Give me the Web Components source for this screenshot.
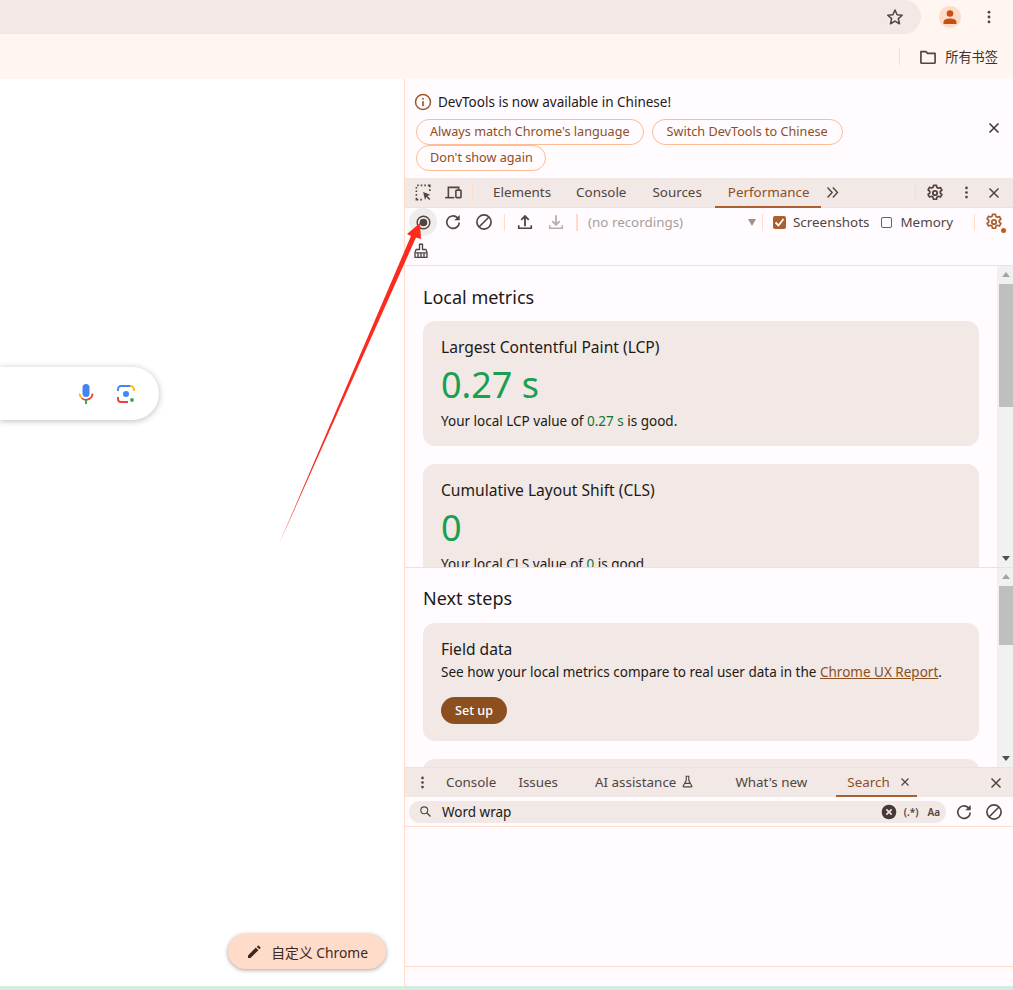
<!DOCTYPE html>
<html>
<head>
<meta charset="utf-8">
<title>DevTools</title>
<style>
html, body { margin: 0; padding: 0; height: 990px; overflow: hidden; background: #fff; }
body { font-family: "Noto Sans", "Noto Sans CJK SC", sans-serif; font-size: 13.5px; color: #201a17; position: relative; }
#arrow { position: absolute; left: 0; top: 0; pointer-events: none; z-index: 5; }
</style>
</head>
<body>
<browser-window></browser-window>
<svg id="arrow" width="1013" height="990" viewBox="0 0 1013 990"><polygon fill="#fb2b1e" points="279,544 411,236 407,234 420,223 421,239 416,237.500"/></svg>

<script>
( function() {
	const ICON = {
		star: '<path d="M12 3.600l2.500 5.700 6.200.6-4.700 4.100 1.400 6.100L12 16.900l-5.400 3.200L8 14 3.300 9.900l6.200-.6z" fill="none" stroke="currentColor" stroke-width="1.800" stroke-linejoin="round"/>',
		folder: '<path d="M3.500 5.500h6l2 2.200h9v10.800a1 1 0 0 1-1 1h-15a1 1 0 0 1-1-1z" fill="none" stroke="currentColor" stroke-width="2" stroke-linejoin="round"/>',
		info: '<circle cx="12" cy="12" r="9" fill="none" stroke="currentColor" stroke-width="1.800"/><rect x="11" y="11" width="2" height="6" fill="currentColor"/><rect x="11" y="7.200" width="2" height="2" fill="currentColor"/>',
		close: '<path d="M6 6l12 12M18 6L6 18" fill="none" stroke="currentColor" stroke-width="2"/>',
		inspect: '<path d="M4 3h2M8.500 3h2M13 3h2M17.500 3H20v2.500M20 8v2M3 5v2M3 9.500v2M3 14v2M3 18.500V21h2.500M8 21h2" fill="none" stroke="currentColor" stroke-width="2"/><path d="M11.500 11.500l9 3.300-3.700 1.500 3.800 3.800-1.400 1.400-3.800-3.800-1.500 3.700z" fill="currentColor"/>',
		device: '<path d="M5.500 18.500V5.500h13V8" fill="none" stroke="currentColor" stroke-width="2"/><path d="M1.500 18.500h11.500" fill="none" stroke="currentColor" stroke-width="2"/><rect x="15" y="9" width="6.500" height="9.500" rx="1" fill="none" stroke="currentColor" stroke-width="2"/>',
		more2: '<path d="M5 5l6.500 7L5 19M12.500 5l6.500 7-6.500 7" fill="none" stroke="currentColor" stroke-width="2"/>',
		gear: '<path d="M10.200 2.800h3.600l.5 2.600 1.700.9 2.500-.9 1.800 3.100-2 1.700v1.900l2 1.700-1.800 3.100-2.500-.9-1.700 1-.5 2.500h-3.600l-.5-2.500-1.700-1-2.500.9-1.800-3.100 2-1.700V9.900l-2-1.700 1.800-3.100 2.500.9 1.700-.9z" fill="none" stroke="currentColor" stroke-width="2" stroke-linejoin="round"/><circle cx="12" cy="12" r="2.600" fill="none" stroke="currentColor" stroke-width="2.200"/>',
		dots: '<circle cx="12" cy="5.500" r="1.900" fill="currentColor"/><circle cx="12" cy="12" r="1.900" fill="currentColor"/><circle cx="12" cy="18.500" r="1.900" fill="currentColor"/>',
		record: '<circle cx="12" cy="12" r="8" fill="none" stroke="currentColor" stroke-width="1.800"/><circle cx="12" cy="12" r="4.800" fill="currentColor"/>',
		reload: '<path d="M19.500 12.500a7.500 7.500 0 1 1-2.300-5.700L19 8.500" fill="none" stroke="currentColor" stroke-width="2"/><path d="M20 3.500v6.500h-6.500z" fill="currentColor"/>',
		block: '<circle cx="12" cy="12" r="8.500" fill="none" stroke="currentColor" stroke-width="2"/><path d="M6 18L18 6" stroke="currentColor" stroke-width="2"/>',
		upload: '<path d="M12 17V6M7.500 9.500L12 5l4.500 4.500" fill="none" stroke="currentColor" stroke-width="2.200"/><path d="M4.500 16v3.500h15V16" fill="none" stroke="currentColor" stroke-width="2"/>',
		download: '<path d="M12 4v11M7.500 11L12 15.500l4.500-4.500" fill="none" stroke="currentColor" stroke-width="2.200"/><path d="M4.500 16v3.500h15V16" fill="none" stroke="currentColor" stroke-width="2"/>',
		broom: '<path d="M10 10V3h4v7h4.500l1.500 4v6.500H4V14l1.500-4z" fill="none" stroke="currentColor" stroke-width="1.800" stroke-linejoin="round"/><path d="M4.500 14.500h15M8 15v5M12 15v5M16 15v5" stroke="currentColor" stroke-width="1.800"/>',
		flask: '<path d="M9 3.500h6M10 4v6l-5 9.500a.7.7 0 0 0 .6 1h12.800a.7.7 0 0 0 .6-1L14 10V4M8 15h8" fill="none" stroke="currentColor" stroke-width="1.800"/>',
		search: '<circle cx="10" cy="10" r="5.500" fill="none" stroke="currentColor" stroke-width="1.800"/><path d="M14 14l6 6" stroke="currentColor" stroke-width="2"/>',
		clear: '<circle cx="12" cy="12" r="11" fill="currentColor"/><path d="M8 8l8 8M16 8l-8 8" stroke="#f2e8e5" stroke-width="2.400"/>',
		pen: '<path d="M3 21v-3.800L14.800 5.400l3.800 3.800L6.800 21zM16.200 4l1.500-1.500a1 1 0 0 1 1.400 0l2.400 2.400a1 1 0 0 1 0 1.400L20 7.800z" fill="currentColor"/>'
	} ;
	function icon(name,size) {
		return '<svg width="'+size+'" height="'+size+'" viewBox="0 0 24 24" style="display:block;flex:none">'+ICON[name]+'</svg>' ;
	}

	class DtIcon extends HTMLElement {
		connectedCallback() {
			var size = this.getAttribute('size') || 20 ;
			var sroot = this.attachShadow({mode:'open'}) ;
			sroot.innerHTML = '<style>:host{display:block;flex:none;color:inherit;line-height:0}</style>' + icon(this.getAttribute('name'),size) ;
		}
	}

	class BrowserBar extends HTMLElement {
		constructor() {
			super() ;
			this.attachShadow({mode:'open'}).innerHTML = `<style>
				:host { display:block; background:#fff6f1; height:79px; color:#504541; }
				.top { display:flex; align-items:center; height:34px; }
				.omni { width:921px; height:34px; flex:none; background:#f2e8e5; border-radius:0 17px 17px 0; box-sizing:border-box; display:flex; justify-content:flex-end; align-items:center; padding-right:16px; }
				.avatar { margin-left:18px; width:22px; height:22px; border-radius:50%; background:#ffdbc9; display:flex; align-items:center; justify-content:center; }
				.menu { margin-left:19px; }
				.marks { display:flex; align-items:center; height:45px; padding-right:15px; justify-content:flex-end; }
				.sep { width:1px; height:17px; background:#ffdbc9; margin-right:18px; }
				.label { font-size:13.200px; margin-left:7px; color:#3a302c; font-family:"Noto Sans CJK SC",sans-serif; }
			</style>
			<div class="top">
				<div class="omni"><dt-icon name="star" size="20"></dt-icon></div>
				<div class="avatar"><svg width="16" height="16" viewBox="0 0 16 16"><circle cx="8" cy="4.500" r="3.300" fill="#c8500f"/><path d="M1.500 15v-2c0-2.500 3.500-3.600 6.500-3.600s6.500 1.100 6.500 3.600v2z" fill="#c8500f"/></svg></div>
				<div class="menu"><dt-icon name="dots" size="18"></dt-icon></div>
			</div>
			<div class="marks"><div class="sep"></div><dt-icon name="folder" size="20"></dt-icon><span class="label">所有书签</span></div>` ;
		}
	}

	class NtpPage extends HTMLElement {
		constructor() {
			super() ;
			this.attachShadow({mode:'open'}).innerHTML = `<style>
				:host { display:flex; flex-direction:column; width:404px; flex:none; background:#fff; overflow:hidden; }
				.search { margin-top:288px; width:159px; height:53px; box-sizing:border-box; background:#fff; border-radius:0 27px 27px 0; box-shadow:0 1px 6px rgba(60,40,30,.32); display:flex; align-items:center; justify-content:flex-end; padding-right:23px; gap:20px; }
				.fill { flex:1; }
				.row { display:flex; justify-content:flex-end; padding:0 18px 17px 0; }
				.cust { display:flex; align-items:center; height:35px; padding:0 18px 0 18px; gap:9px; border-radius:18px; background:#ffdbc9; box-shadow:0 1px 4px rgba(60,40,30,.45); color:#3a2a22; font-size:13.800px; font-family:"Noto Sans","Noto Sans CJK SC",sans-serif; }
			</style>
			<div class="search">
				<svg width="20" height="22" viewBox="0 0 20 22"><rect x="6.500" y="1" width="7" height="13" rx="3.500" fill="#4285f4"/><path d="M3.500 10.500a6.500 6.500 0 0 0 2.800 5" fill="none" stroke="#fbbc04" stroke-width="1.800"/><path d="M6 15.400a6.500 6.500 0 0 0 10.500-4.900" fill="none" stroke="#ea4335" stroke-width="1.800"/><rect x="9" y="17" width="2" height="4" fill="#34a853"/></svg>
				<svg width="20" height="20" viewBox="0 0 20 20"><path d="M2 7V5a3 3 0 0 1 3-3h9" fill="none" stroke="#4285f4" stroke-width="1.900"/><path d="M14 2a4 4 0 0 1 4 4v1" fill="none" stroke="#fbbc04" stroke-width="1.900"/><path d="M2 13v2a3 3 0 0 0 3 3h7" fill="none" stroke="#ea4335" stroke-width="1.900"/><circle cx="10" cy="10" r="3" fill="#4285f4"/><circle cx="16" cy="16" r="1.900" fill="#34a853"/></svg>
			</div>
			<div class="fill"></div>
			<div class="row"><div class="cust"><dt-icon name="pen" size="16"></dt-icon><span>自定义 Chrome</span></div></div>` ;
		}
	}

	class InfoBar extends HTMLElement {
		constructor() {
			super() ;
			this.attachShadow({mode:'open'}).innerHTML = `<style>
				:host { display:block; height:99px; box-sizing:border-box; padding:13px 11px 0 8px; position:relative; }
				.msg { display:flex; align-items:center; gap:5px; height:20px; font-size:13.500px; color:#201a17; }
				.msg dt-icon { color:#a0592b; }
				.btns { display:flex; flex-wrap:wrap; gap:0 8px; margin:7px 0 0 3px; width:500px; }
				.btns span { display:block; height:26px; box-sizing:border-box; line-height:23px; padding:0 13px; border:1px solid #fdbc92; border-radius:13px; font-size:12.650px; color:#8c4f1f; white-space:nowrap; }
				.btns span:nth-child(2) { padding:0 14px; }
				.btns span:nth-child(3) { padding:0 12px 0 13px; }
				.x { position:absolute; right:10px; top:40px; color:#3d3330; }
			</style>
			<div class="msg"><dt-icon name="info" size="20"></dt-icon><span>DevTools is now available in Chinese!</span></div>
			<div class="btns"><span>Always match Chrome's language</span><span>Switch DevTools to Chinese</span><span>Don't show again</span></div>
			<div class="x"><dt-icon name="close" size="18"></dt-icon></div>` ;
		}
	}

	class MainTabs extends HTMLElement {
		constructor() {
			super() ;
			this.attachShadow({mode:'open'}).innerHTML = `<style>
				:host { display:flex; align-items:stretch; height:30px; box-sizing:border-box; background:#f2e8e5; border-bottom:1px solid #ffdbc9; color:#504541; font-size:13.400px; }
				.ic { display:flex; align-items:center; }
				.v { width:1px; height:17px; background:#ffdbc9; align-self:center; }
				.tab { display:flex; align-items:center; padding:0 13px 2px; position:relative; }
				.tab.on { color:#8c4f1f; padding-right:11px; }
				.tab.on::after { content:""; position:absolute; left:0; right:0; bottom:-1px; height:2px; background:#a9602e; }
				.fill { flex:1; }
			</style>
			<div class="ic" style="margin-left:9px"><dt-icon name="inspect" size="19"></dt-icon></div>
			<div class="ic" style="margin-left:11px"><dt-icon name="device" size="19"></dt-icon></div>
			<div class="v" style="margin:0 12px 0 9px"></div>
			<div class="tab" style="padding-left:8px;padding-right:12px">Elements</div>
			<div class="tab">Console</div>
			<div class="tab">Sources</div>
			<div class="tab on">Performance</div>
			<div class="ic" style="margin-left:3px"><dt-icon name="more2" size="17"></dt-icon></div>
			<div class="fill"></div>
			<div class="v" style="margin-right:9px"></div>
			<div class="ic"><dt-icon name="gear" size="20"></dt-icon></div>
			<div class="ic" style="margin-left:13px"><dt-icon name="dots" size="17"></dt-icon></div>
			<div class="ic" style="margin:0 10px 0 10px"><dt-icon name="close" size="18"></dt-icon></div>` ;
		}
	}

	class PerfToolbar extends HTMLElement {
		constructor() {
			super() ;
			this.attachShadow({mode:'open'}).innerHTML = `<style>
				:host { display:block; height:58px; box-sizing:border-box; border-bottom:1px solid #ffdbc9; color:#504541; font-size:13.400px; }
				.r { display:flex; align-items:center; height:28px; }
				.rec { width:28px; height:28px; border-radius:50%; background:#efedec; display:flex; align-items:center; justify-content:center; margin-left:4px; }
				.b { width:31px; display:flex; justify-content:center; }
				.v { width:1px; height:17px; background:#ffdbc9; flex:none; }
				.dis { color:#b9b0ac; }
				.sel { width:171px; flex:none; box-sizing:border-box; color:#a89e9a; display:flex; justify-content:space-between; align-items:center; margin-left:10px; }
				.tri { width:0; height:0; border:4.500px solid transparent; border-top:7px solid #9b908c; border-bottom:0; margin-right:3px; }
				.chk { width:13px; height:13px; border-radius:2px; background:#a9602e; display:flex; align-items:center; justify-content:center; flex:none; }
				.box { width:9px; height:9px; border-radius:2px; border:1.500px solid #6b5f5b; flex:none; }
				.second { height:29px; display:flex; align-items:center; padding-left:7px; }
				.gear { position:relative; color:#a9602e; }
				.gear i { position:absolute; right:-2px; bottom:-1px; width:5px; height:5px; border-radius:50%; background:#c55a1a; }
			</style>
			<div class="r">
				<div class="rec"><dt-icon name="record" size="19"></dt-icon></div>
				<div class="b"><dt-icon name="reload" size="20"></dt-icon></div>
				<div class="b"><dt-icon name="block" size="20"></dt-icon></div>
				<div class="v" style="margin:0 10px 0 5px"></div>
				<dt-icon name="upload" size="20"></dt-icon>
				<div class="b dis" style="margin-left:5px"><dt-icon name="download" size="20"></dt-icon></div>
				<div class="v" style="width:2px;margin-left:5px"></div>
				<div class="sel"><span>(no recordings)</span><span class="tri"></span></div>
				<div class="v" style="margin:0 10px 0 3px"></div>
				<div class="chk"><svg width="11" height="11" viewBox="0 0 11 11"><path d="M1.500 5.500l3 3 5-6.500" fill="none" stroke="#fff" stroke-width="1.800"/></svg></div>
				<span style="margin-left:7px">Screenshots</span>
				<div class="box" style="margin-left:12px"></div>
				<span style="margin-left:8px">Memory</span>
				<div class="v" style="margin:0 9px 0 21px"></div>
				<div class="gear"><dt-icon name="gear" size="20"></dt-icon><i></i></div>
			</div>
			<div class="second"><dt-icon name="broom" size="18"></dt-icon></div>` ;
		}
	}

	class MetricCard extends HTMLElement {
		constructor() {
			super() ;
			this.attachShadow({mode:'open'}).innerHTML = `<style>
				:host { display:block; background:#f2e8e5; border-radius:12px; padding:16px 18px 15px; margin-bottom:18px; color:#201a17; flex:none; }
				.t { font-size:15.600px; line-height:21px; }
				.v { font-size:36px; line-height:45px; color:#1a9e50; margin-top:4px; }
				.d { font-size:13.500px; line-height:19px; margin-top:5px; }
				::slotted(b) { font-weight:400; color:#137333; }
			</style>
			<div class="t"></div><div class="v"></div><div class="d"><slot></slot></div>` ;
		}
		connectedCallback() {
			this.shadowRoot.querySelector('.t').textContent = this.getAttribute('label') ;
			this.shadowRoot.querySelector('.v').textContent = this.getAttribute('value') ;
		}
	}

	class ScrollPane extends HTMLElement {
		constructor() {
			super() ;
			this.attachShadow({mode:'open'}).innerHTML = `<style>
				:host { display:flex; background:#fffbff; overflow:hidden; position:relative; flex:none; }
				.c { flex:1; min-width:0; padding:18px 18px 0 18px; overflow:hidden; display:flex; flex-direction:column; }
				.h { font-size:18px; line-height:26px; color:#201a17; margin-bottom:11px; flex:none; margin-top:var(--h-shift,0); }
				.bar { width:16px; flex:none; background:#f1f1f1; position:relative; }
				.up,.dn { position:absolute; left:5px; width:0; height:0; border:4px solid transparent; }
				.up { top:6px; border-top:0; border-bottom:5px solid #a3a3a3; }
				.dn { bottom:6px; border-bottom:0; border-top:5px solid #505050; }
				.th { position:absolute; left:2px; right:0; background:#bfbfbf; }
			</style>
			<div class="c"><div class="h"></div><slot></slot></div>
			<div class="bar"><div class="up"></div><div class="th"></div><div class="dn"></div></div>` ;
		}
		connectedCallback() {
			this.style.height = this.getAttribute('h')+'px' ;
			this.shadowRoot.querySelector('.h').textContent = this.getAttribute('title-text') ;
			var th = this.shadowRoot.querySelector('.th') ;
			th.style.top = this.getAttribute('thumb-top')+'px' ;
			th.style.height = this.getAttribute('thumb-h')+'px' ;
		}
	}

	class FieldCard extends HTMLElement {
		constructor() {
			super() ;
			this.attachShadow({mode:'open'}).innerHTML = `<style>
				:host { display:block; background:#f2e8e5; border-radius:12px; padding:16px 18px 17px; margin-bottom:18px; color:#201a17; flex:none; }
				.t { font-size:15.600px; line-height:20px; }
				.d { font-size:13.500px; line-height:19px; margin-top:4px; white-space:nowrap; }
				a { color:#8c4f1f; text-decoration:underline; }
				.btn { display:inline-block; margin-top:15px; height:27px; line-height:27px; padding:0 14px; border-radius:14px; background:#8c4f1f; color:#fff; font-size:12.600px; font-weight:500; }
			</style>
			<div class="body"><div class="t">Field data</div>
			<div class="d">See how your local metrics compare to real user data in the <a>Chrome UX Report</a>.</div>
			<div class="btn">Set up</div></div>` ;
		}
		connectedCallback() {
			// the next card only shows its top edge, scrolled out of the pane
			if ( this.hasAttribute('blank') )
				this.shadowRoot.querySelector('.body').remove() ;
		}
	}

	class DrawerTabs extends HTMLElement {
		constructor() {
			super() ;
			this.attachShadow({mode:'open'}).innerHTML = `<style>
				:host { display:flex; align-items:stretch; height:30px; box-sizing:border-box; background:#f2e8e5; border-top:1px solid #ffdbc9; color:#504541; font-size:13.400px; }
				.tab { display:flex; align-items:center; position:relative; padding-bottom:2px; }
				.on { color:#8c4f1f; }
				.on::after { content:""; position:absolute; left:-11px; right:-5px; bottom:0; height:2px; background:#a9602e; }
				.fill { flex:1; }
				.ic { display:flex; align-items:center; }
			</style>
			<div class="ic" style="margin-left:9px"><dt-icon name="dots" size="17"></dt-icon></div>
			<div class="tab" style="margin-left:15px">Console</div>
			<div class="tab" style="margin-left:22px">Issues</div>
			<div class="tab" style="margin-left:37px">AI assistance<dt-icon name="flask" size="15" style="margin-left:4px"></dt-icon></div>
			<div class="tab" style="margin-left:40px">What's new</div>
			<div class="tab on" style="margin-left:40px">Search<span class="ic" style="margin-left:8px;color:#504541"><dt-icon name="close" size="14"></dt-icon></span></div>
			<div class="fill"></div>
			<div class="ic" style="margin-right:8px"><dt-icon name="close" size="18"></dt-icon></div>` ;
		}
	}

	class SearchRow extends HTMLElement {
		constructor() {
			super() ;
			this.attachShadow({mode:'open'}).innerHTML = `<style>
				:host { display:flex; align-items:center; height:30px; box-sizing:border-box; border-bottom:1px solid #ffdbc9; padding:0 9px 0 4px; color:#504541; }
				.box { flex:1; height:22px; background:#f2e8e5; border-radius:11px; display:flex; align-items:center; padding:0 6px 0 9px; color:#201a17; font-size:13.500px; }
				.q { margin-left:9px; flex:1; }
				.o { font-size:10px; font-weight:600; color:#504541; }
				.ic { display:flex; }
			</style>
			<div class="box"><dt-icon name="search" size="15" style="color:#504541"></dt-icon><span class="q">Word wrap</span><dt-icon name="clear" size="16" style="color:#45393a"></dt-icon><span class="o" style="margin-left:7px">(.*)</span><span class="o" style="margin-left:9px">Aa</span></div>
			<div class="ic" style="margin-left:8px"><dt-icon name="reload" size="20"></dt-icon></div>
			<div class="ic" style="margin-left:10px"><dt-icon name="block" size="20"></dt-icon></div>` ;
		}
	}

	class DevTools extends HTMLElement {
		constructor() {
			super() ;
			this.attachShadow({mode:'open'}).innerHTML = `<style>
				:host { display:flex; flex-direction:column; flex:1; min-width:0; background:#fffbff; border-left:1px solid #ffdbc9; }
				.div { height:1px; background:#ffdbc9; flex:none; }
				.results { height:139px; flex:none; }
				.foot { flex:1; border-top:1px solid #ffdbc9; }
			</style>
			<info-bar></info-bar>
			<main-tabs></main-tabs>
			<perf-toolbar></perf-toolbar>
			<scroll-pane h="301" title-text="Local metrics" thumb-top="18" thumb-h="123">
				<metric-card label="Largest Contentful Paint (LCP)" value="0.27 s">Your local LCP value of <b>0.27 s</b> is good.</metric-card>
				<metric-card label="Cumulative Layout Shift (CLS)" value="0">Your local CLS value of <b>0</b> is good.</metric-card>
			</scroll-pane>
			<div class="div"></div>
			<scroll-pane h="199" title-text="Next steps" thumb-top="18" thumb-h="59" style="--h-shift:-1px">
				<field-card style="margin-top:1px"></field-card>
				<field-card blank style="height:80px"></field-card>
			</scroll-pane>
			<drawer-tabs></drawer-tabs>
			<search-row></search-row>
			<div class="results"></div>
			<div class="foot"></div>` ;
		}
	}

	class BrowserWindow extends HTMLElement {
		constructor() {
			super() ;
			this.attachShadow({mode:'open'}).innerHTML = `<style>
				:host { display:flex; flex-direction:column; height:990px; width:1013px; }
				.main { display:flex; height:907px; flex:none; }
				.strip { flex:1; background:#d4ede0; }
			</style>
			<browser-bar></browser-bar>
			<div class="main"><ntp-page></ntp-page><dev-tools></dev-tools></div>
			<div class="strip"></div>` ;
		}
	}

	customElements.define('dt-icon',DtIcon) ;
	customElements.define('browser-bar',BrowserBar) ;
	customElements.define('ntp-page',NtpPage) ;
	customElements.define('info-bar',InfoBar) ;
	customElements.define('main-tabs',MainTabs) ;
	customElements.define('perf-toolbar',PerfToolbar) ;
	customElements.define('metric-card',MetricCard) ;
	customElements.define('scroll-pane',ScrollPane) ;
	customElements.define('field-card',FieldCard) ;
	customElements.define('drawer-tabs',DrawerTabs) ;
	customElements.define('search-row',SearchRow) ;
	customElements.define('dev-tools',DevTools) ;
	customElements.define('browser-window',BrowserWindow) ;
} ) () ;
</script>
</body>
</html>
